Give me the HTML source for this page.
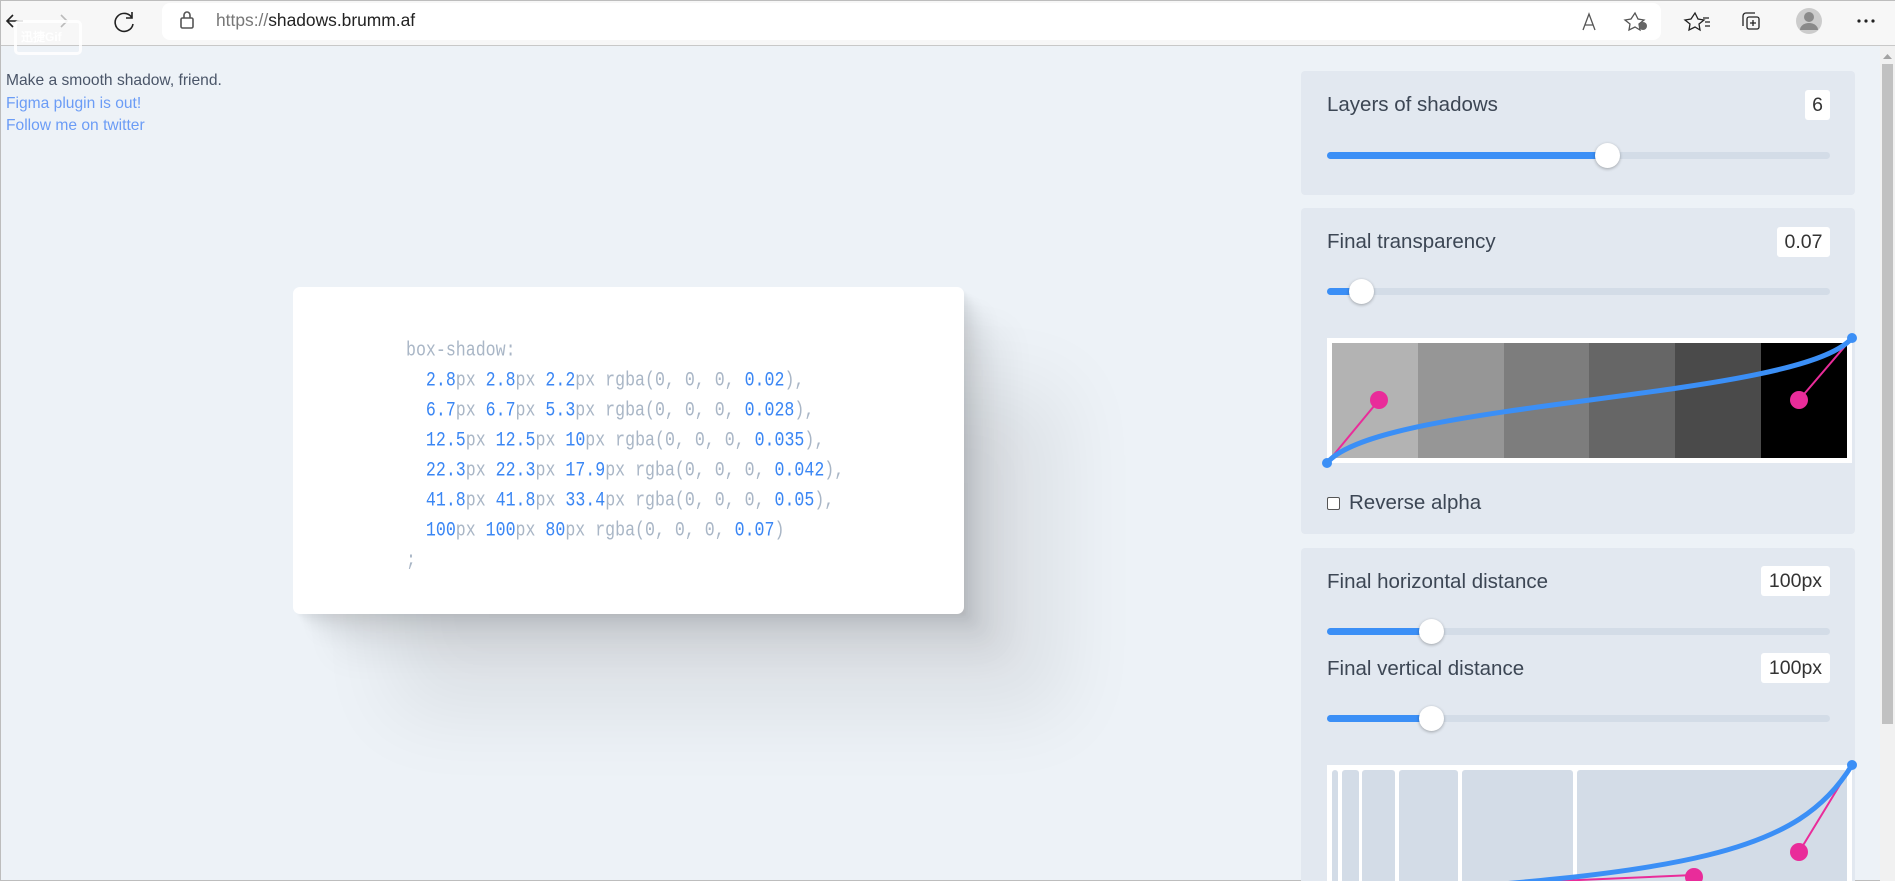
<!DOCTYPE html>
<html style="overflow:hidden;width:1895px;height:881px"><head><meta charset="utf-8"><style>
*{box-sizing:border-box;margin:0;padding:0}
body{width:1895px;height:881px;overflow:hidden;background:#edf2f7;font-family:"Liberation Sans",sans-serif;position:relative;border:1px solid #bdbdbd}
.tb{position:absolute;left:0;top:0;width:1895px;height:45px;background:#f7f7f7;border-bottom:1px solid #c8c8c8}
.addr{position:absolute;left:161px;top:2px;width:1499px;height:37px;background:#fff;border-radius:8px}
.url{position:absolute;left:215px;top:9px;font-size:17.4px;color:#222}
.url span{color:#777}
.p{position:absolute;left:1300px;width:554px;background:#e2e8f0;border-radius:4px}
.lab{position:absolute;left:26px;font-size:20.5px;color:#3c4654}
.val{position:absolute;background:#fff;border-radius:3px;font-size:19.5px;color:#333;text-align:center;line-height:30px;height:30px}
.tr{position:absolute;left:26px;width:503px;height:7px;border-radius:4px;background:#d3dce7}
.fi{position:absolute;left:0;top:0;height:7px;border-radius:4px;background:#3b8ff6}
.th{position:absolute;top:-9px;width:25px;height:25px;border-radius:50%;background:#fff;box-shadow:0 1px 3px rgba(0,0,0,.3)}
.card{position:absolute;left:292px;top:286px;width:671px;height:327px;background:#fff;border-radius:7px;
box-shadow:2.8px 2.8px 2.2px rgba(0,0,0,.02),6.7px 6.7px 5.3px rgba(0,0,0,.028),12.5px 12.5px 10px rgba(0,0,0,.035),22.3px 22.3px 17.9px rgba(0,0,0,.042),41.8px 41.8px 33.4px rgba(0,0,0,.05),100px 100px 80px rgba(0,0,0,.07)}
pre{position:absolute;left:113px;top:48px;font-family:"Liberation Mono","Noto Sans CJK SC",monospace;font-size:16.6px;line-height:25px;color:#a9b6c6;transform:scaleY(1.2);transform-origin:0 0}
pre b{color:#3a86f4;font-weight:normal}
.left{position:absolute;left:5px;font-size:15.6px}
</style></head><body>
<div class="tb">
<div class="addr"></div>
<svg style="position:absolute;left:0;top:0" width="1895" height="44">
<g fill="none" stroke="#222" stroke-width="1.6">
<path d="M6 20h16M12 14l-6 6 6 6"/>
<path d="M60 14l6 6-6 6" stroke="#bbb"/>
<path d="M131 17a9 9 0 1 0 1 6M131 11v6h-6"/>
<rect x="180" y="17" width="12" height="10" rx="1.5" stroke="#555"/><path d="M183 17v-3a3 3 0 0 1 6 0v3" stroke="#555"/>
<path d="M1582 29l6-16 6 16M1584 24h8" stroke="#555" stroke-width="1.3"/>
<path d="M1634 12l3 6 6 1-5 4 1 6-5-3-6 3 1-6-5-4 6-1z" stroke="#555" stroke-width="1.3"/>
<path d="M1694 12l3 6 6 1-5 4 1 6-5-3-6 3 1-6-5-4 6-1zM1702 17h6M1704 21h5M1704 25h5" stroke-width="1.3"/>
<rect x="1746" y="16" width="12" height="12" rx="2" stroke-width="1.3"/><path d="M1742 25v-10a3 3 0 0 1 3-3h9M1752 19v6M1749 22h6" stroke-width="1.3"/>
</g>
<circle cx="1642" cy="25" r="4" fill="#666"/>
<circle cx="1808" cy="20" r="13" fill="#ccc"/><circle cx="1808" cy="16" r="5" fill="#8a8a8a"/><path d="M1799 29a9 7 0 0 1 18 0z" fill="#8a8a8a"/>
<circle cx="1858" cy="20" r="1.6" fill="#222"/><circle cx="1865" cy="20" r="1.6" fill="#222"/><circle cx="1872" cy="20" r="1.6" fill="#222"/>
</svg>
<div class="url"><span>https://</span>shadows.brumm.af</div>
</div>
<div style="position:absolute;left:13px;top:19px;width:68px;height:35px;border:3px solid rgba(255,255,255,.85);border-radius:5px;color:rgba(255,255,255,.9);font-size:12px;font-weight:bold;padding:5px 4px">迅捷Gif</div>
<div class="left" style="top:71px;color:#4a5568">Make a smooth shadow, friend.</div>
<div class="left" style="top:94px;color:#6b9cf6">Figma plugin is out!</div>
<div class="left" style="top:116px;color:#6b9cf6">Follow me on twitter</div>

<div class="card"><pre>box-shadow:
  <b>2.8</b>px <b>2.8</b>px <b>2.2</b>px rgba(0, 0, 0, <b>0.02</b>),
  <b>6.7</b>px <b>6.7</b>px <b>5.3</b>px rgba(0, 0, 0, <b>0.028</b>),
  <b>12.5</b>px <b>12.5</b>px <b>10</b>px rgba(0, 0, 0, <b>0.035</b>),
  <b>22.3</b>px <b>22.3</b>px <b>17.9</b>px rgba(0, 0, 0, <b>0.042</b>),
  <b>41.8</b>px <b>41.8</b>px <b>33.4</b>px rgba(0, 0, 0, <b>0.05</b>),
  <b>100</b>px <b>100</b>px <b>80</b>px rgba(0, 0, 0, <b>0.07</b>)
;</pre></div>

<div class="p" style="top:70px;height:124px">
<div class="lab" style="top:22px">Layers of shadows</div>
<div class="val" style="left:504px;top:19px;width:25px">6</div>
<div class="tr" style="top:81px"><div class="fi" style="width:280px"></div><div class="th" style="left:268px"></div></div>
</div>

<div class="p" style="top:207px;height:326px">
<div class="lab" style="top:22px">Final transparency</div>
<div class="val" style="left:476px;top:19px;width:53px">0.07</div>
<div class="tr" style="top:80px"><div class="fi" style="width:40px"></div><div class="th" style="left:22px"></div></div>
<div style="position:absolute;left:26px;top:130px;width:525px;height:125px;background:#fff"></div>
<div style="position:absolute;left:31px;top:135px;height:115px;display:flex">
<div style="width:86px;background:#b3b3b3"></div><div style="width:86px;background:#969696"></div><div style="width:85px;background:#7d7d7d"></div><div style="width:86px;background:#666"></div><div style="width:86px;background:#4a4a4a"></div><div style="width:86px;background:#000"></div></div>
<div style="position:absolute;left:26px;top:289px;width:13px;height:13px;border:1px solid #555;border-radius:2px;background:#fff"></div>
<div class="lab" style="left:48px;top:283px">Reverse alpha</div>
</div>

<div class="p" style="top:547px;height:334px;border-radius:4px 4px 0 0">
<div class="lab" style="top:22px">Final horizontal distance</div>
<div class="val" style="left:460px;top:18px;width:69px">100px</div>
<div class="tr" style="top:80px"><div class="fi" style="width:110px"></div><div class="th" style="left:92px"></div></div>
<div class="lab" style="top:109px">Final vertical distance</div>
<div class="val" style="left:460px;top:105px;width:69px">100px</div>
<div class="tr" style="top:167px"><div class="fi" style="width:110px"></div><div class="th" style="left:92px"></div></div>
<div style="position:absolute;left:26px;top:217px;width:525px;height:117px;background:#fff"></div>
<div style="position:absolute;left:31px;top:222px;height:112px">
<div style="position:absolute;left:0;width:6px;height:112px;background:#d3dce7;border-radius:3px 3px 0 0"></div>
<div style="position:absolute;left:10px;width:17px;height:112px;background:#d3dce7;border-radius:3px 3px 0 0"></div>
<div style="position:absolute;left:30px;width:33px;height:112px;background:#d3dce7;border-radius:3px 3px 0 0"></div>
<div style="position:absolute;left:67px;width:59px;height:112px;background:#d3dce7;border-radius:3px 3px 0 0"></div>
<div style="position:absolute;left:130px;width:111px;height:112px;background:#d3dce7;border-radius:3px 3px 0 0"></div>
<div style="position:absolute;left:245px;width:270px;height:112px;background:#d3dce7;border-radius:3px 3px 0 0"></div>
</div>
</div>

<svg style="position:absolute;left:0;top:0" width="1895" height="881">
<g stroke="#e92c9a" stroke-width="2"><line x1="1326" y1="462" x2="1378" y2="399"/><line x1="1851" y1="337" x2="1798" y2="399"/>
<line x1="1851" y1="764" x2="1798" y2="851"/><line x1="1440" y1="885" x2="1693" y2="874"/></g>
<path d="M1326 462C1378 399 1798 399 1851 337" fill="none" stroke="#3b8ff6" stroke-width="5"/>
<path d="M1326 895C1693 874 1798 851 1851 764" fill="none" stroke="#3b8ff6" stroke-width="5"/>
<circle cx="1378" cy="399" r="9" fill="#e92c9a"/><circle cx="1798" cy="399" r="9" fill="#e92c9a"/>
<circle cx="1798" cy="851" r="9" fill="#e92c9a"/><circle cx="1693" cy="876" r="9" fill="#e92c9a"/>
<circle cx="1326" cy="462" r="5" fill="#3b8ff6"/><circle cx="1851" cy="337" r="5" fill="#3b8ff6"/><circle cx="1851" cy="764" r="5" fill="#3b8ff6"/>
</svg>

<div style="position:absolute;left:1879px;top:45px;width:15px;height:835px;background:#f1f1f1"></div>
<div style="position:absolute;left:1881px;top:63px;width:11px;height:660px;background:#c1c1c1"></div>
<svg style="position:absolute;left:1881px;top:50px" width="11" height="10"><path d="M1 8h9L5.5 3z" fill="#a3a3a3"/></svg>
</body></html>
